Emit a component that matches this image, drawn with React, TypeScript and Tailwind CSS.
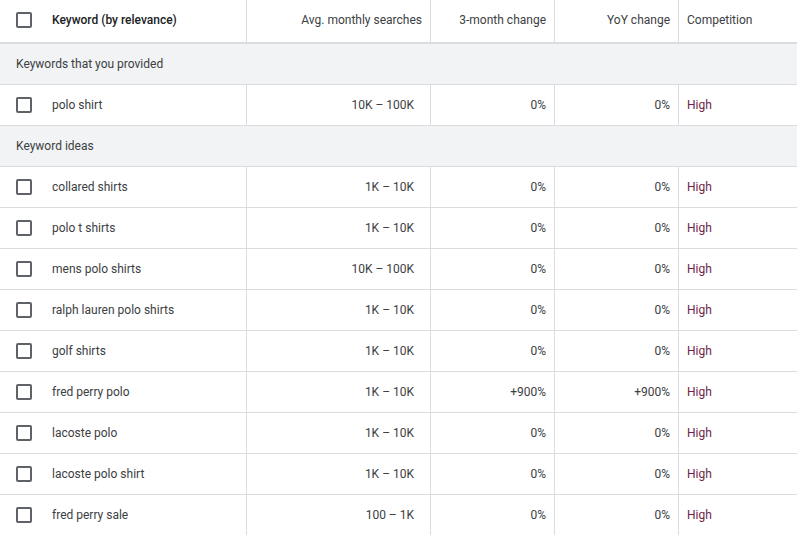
import React from "react";

type Row = { kw: string; avg: string; m3: string; yoy: string; comp: string };

const provided: Row[] = [{ kw: "polo shirt", avg: "10K – 100K", m3: "0%", yoy: "0%", comp: "High" }];
const ideas: Row[] = [
  { kw: "collared shirts", avg: "1K – 10K", m3: "0%", yoy: "0%", comp: "High" },
  { kw: "polo t shirts", avg: "1K – 10K", m3: "0%", yoy: "0%", comp: "High" },
  { kw: "mens polo shirts", avg: "10K – 100K", m3: "0%", yoy: "0%", comp: "High" },
  { kw: "ralph lauren polo shirts", avg: "1K – 10K", m3: "0%", yoy: "0%", comp: "High" },
  { kw: "golf shirts", avg: "1K – 10K", m3: "0%", yoy: "0%", comp: "High" },
  { kw: "fred perry polo", avg: "1K – 10K", m3: "+900%", yoy: "+900%", comp: "High" },
  { kw: "lacoste polo", avg: "1K – 10K", m3: "0%", yoy: "0%", comp: "High" },
  { kw: "lacoste polo shirt", avg: "1K – 10K", m3: "0%", yoy: "0%", comp: "High" },
  { kw: "fred perry sale", avg: "100 – 1K", m3: "0%", yoy: "0%", comp: "High" },
];

const Box = () => (
  <div className="w-4 h-4 border-2 border-[#5f6368] rounded-[2px] shrink-0" />
);

const grid = "grid grid-cols-[247px_184px_124px_124px_1fr]";

function DataRow({ r }: { r: Row }) {
  return (
    <div className={`${grid} h-[41px] border-b border-[#dadce0] text-[12px] text-[#3c4043]`}>
      <div className="flex items-center border-r border-[#dadce0] pl-4">
        <Box />
        <span className="ml-5">{r.kw}</span>
      </div>
      <div className="flex items-center justify-end border-r border-[#dadce0] pr-4">{r.avg}</div>
      <div className="flex items-center justify-end border-r border-[#dadce0] pr-2">{r.m3}</div>
      <div className="flex items-center justify-end border-r border-[#dadce0] pr-2">{r.yoy}</div>
      <div className="flex items-center pl-2 text-[#6e2548]">{r.comp}</div>
    </div>
  );
}

function Group({ label }: { label: string }) {
  return (
    <div className="h-[41px] bg-[#f1f3f4] border-b border-[#dadce0] flex items-center pl-4 text-[12px] text-[#3c4043]">
      {label}
    </div>
  );
}

export default function App() {
  return (
    <div
      className="w-[797px] h-[535px] overflow-hidden bg-white"
      style={{ fontFamily: "Roboto, 'Liberation Sans', sans-serif" }}
    >
      <div className={`${grid} h-[44px] border-b-2 border-[#dadce0] text-[12px] text-[#3c4043]`}>
        <div className="flex items-center border-r border-[#dadce0] pl-4 pb-[2px]">
          <Box />
          <span className="ml-5 font-medium text-[#202124]">Keyword (by relevance)</span>
        </div>
        <div className="flex items-center justify-end border-r border-[#dadce0] pr-2 pb-[2px]">Avg. monthly searches</div>
        <div className="flex items-center justify-end border-r border-[#dadce0] pr-2 pb-[2px]">3-month change</div>
        <div className="flex items-center justify-end border-r border-[#dadce0] pr-2 pb-[2px]">YoY change</div>
        <div className="flex items-center pl-2 pb-[2px]">Competition</div>
      </div>
      <Group label="Keywords that you provided" />
      {provided.map((r) => (
        <DataRow key={r.kw} r={r} />
      ))}
      <Group label="Keyword ideas" />
      {ideas.map((r) => (
        <DataRow key={r.kw} r={r} />
      ))}
    </div>
  );
}
